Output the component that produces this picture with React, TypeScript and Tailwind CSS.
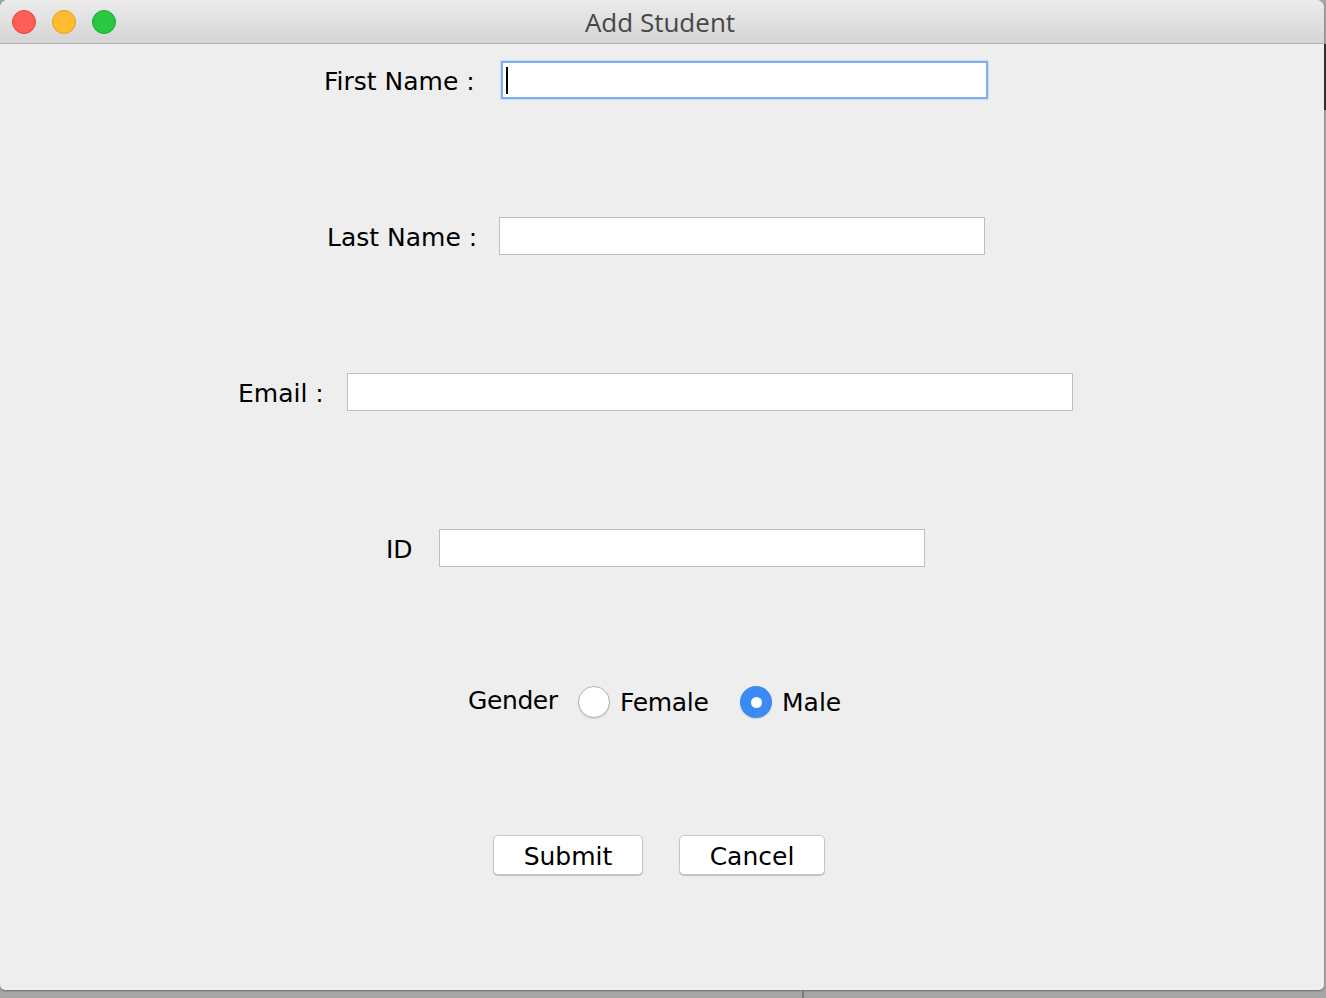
import React from 'react';

const font = { fontFamily: '"DejaVu Sans", "Liberation Sans", sans-serif' };

function Field({ width, focused }: { width: string; focused?: boolean }) {
  return (
    <div
      className={`${width} h-[38px] bg-white flex items-center pl-[3px] ${
        focused
          ? 'border-2 border-[#7fb0ee] shadow-[0_0_0_1px_rgba(140,185,245,0.35)]'
          : 'border border-[#bdbdbd]'
      }`}
    >
      {focused && <span className="w-[2px] h-[27px] bg-black" />}
    </div>
  );
}

function Radio({ checked }: { checked?: boolean }) {
  return checked ? (
    <span className="w-[32px] h-[32px] rounded-full bg-[#3b8bf5] flex items-center justify-center shadow-[0_1px_1px_rgba(0,0,0,0.15)]">
      <span className="w-[11px] h-[11px] rounded-full bg-white" />
    </span>
  ) : (
    <span className="w-[32px] h-[32px] rounded-full bg-white border border-[#b4b4b4] shadow-[0_1px_1px_rgba(0,0,0,0.12)]" />
  );
}

function Button({ label, width }: { label: string; width: string }) {
  return (
    <button className={`${width} h-[40px] pt-[2px] bg-white border border-[#c6c6c6] rounded-[5px] shadow-[0_1px_1px_rgba(0,0,0,0.2)] text-[25px] text-black leading-none`}>
      {label}
    </button>
  );
}

export default function App() {
  return (
    <div className="w-[1326px] h-[998px] bg-[#a5a5a5] relative overflow-hidden" style={font}>
      {/* window behind, peeking out */}
      <div className="absolute right-0 top-[44px] w-[2px] h-[66px] bg-[#2e2e2e]" />
      <div className="absolute left-[802px] top-[990px] w-[2px] h-[8px] bg-[#7a7a7a]" />

      <div className="w-[1324px] h-[990px] flex flex-col rounded-t-[8px] rounded-b-[5px] overflow-hidden bg-[#eeeeee] shadow-[0_1px_2px_rgba(0,0,0,0.35)]">
        <div className="h-[44px] shrink-0 relative flex items-center justify-center bg-gradient-to-b from-[#ececec] to-[#d4d4d4] border-b border-[#b1b1b1]">
          <div className="absolute left-[12px] top-[10px] flex gap-[16px]">
            <span className="w-[24px] h-[24px] rounded-full bg-[#fd5f57] border border-[#e0443e]" />
            <span className="w-[24px] h-[24px] rounded-full bg-[#febc2e] border border-[#dea123]" />
            <span className="w-[24px] h-[24px] rounded-full bg-[#29c840] border border-[#1aab29]" />
          </div>
          <span className="text-[26px] text-[#474747] pr-[4px] pt-[1px]" style={{ fontFamily: '"Open Sans", "DejaVu Sans", sans-serif' }}>
            Add Student
          </span>
        </div>

        <div className="flex flex-col text-[25px] text-black">
          <div className="flex items-center h-[38px] mt-[17px] pl-[324px]">
            <span className="w-[177px] pt-[3px]">First Name :</span>
            <Field width="w-[487px]" focused />
          </div>

          <div className="flex items-center h-[38px] mt-[118px] pl-[327px]">
            <span className="w-[172px] pt-[3px]">Last Name :</span>
            <Field width="w-[486px]" />
          </div>

          <div className="flex items-center h-[38px] mt-[118px] pl-[238px]">
            <span className="w-[109px] pt-[3px]">Email :</span>
            <Field width="w-[726px]" />
          </div>

          <div className="flex items-center h-[38px] mt-[118px] pl-[386px]">
            <span className="w-[53px] pt-[3px]">ID</span>
            <Field width="w-[486px]" />
          </div>

          <div className="flex items-center h-[38px] mt-[116px] pl-[468px]">
            <span className="w-[110px] -mt-[2px] tracking-[-0.4px]">Gender</span>
            <Radio />
            <span className="w-[130px] pl-[10px] pt-[2px] tracking-[-0.3px]">Female</span>
            <Radio checked />
            <span className="pl-[10px] pt-[2px]">Male</span>
          </div>

          <div className="flex items-center h-[40px] mt-[114px] pl-[493px] gap-[36px]">
            <Button label="Submit" width="w-[150px]" />
            <Button label="Cancel" width="w-[146px]" />
          </div>
        </div>
      </div>
    </div>
  );
}
